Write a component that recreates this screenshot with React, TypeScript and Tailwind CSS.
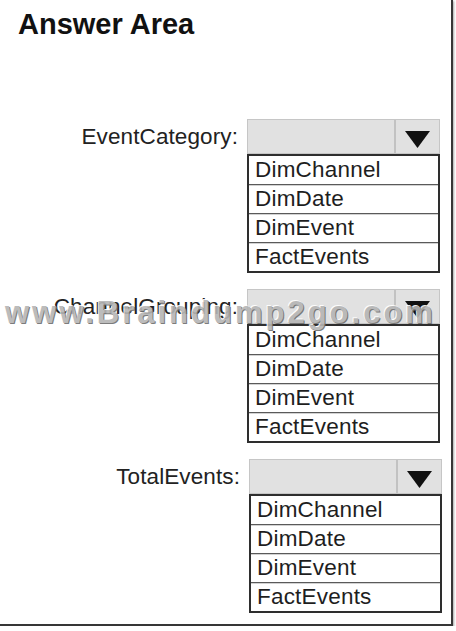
import React from 'react';

const options = ['DimChannel', 'DimDate', 'DimEvent', 'FactEvents'];

interface DropdownProps {
  label: string;
  shift?: boolean;
}

const Arrow = () => (
  <svg width="25" height="17" viewBox="0 0 25 17" className="mt-[6px]">
    <polygon points="0,0 25,0 12.5,17" fill="#111" />
  </svg>
);

const Dropdown: React.FC<DropdownProps> = ({ label, shift }) => (
  <div className={shift ? 'flex items-start ml-[2px]' : 'flex items-start'}>
    <div className="w-[238px] h-[35px] flex items-center justify-end text-[22.5px] text-[#222] tracking-[0.1px]">
      {label}
    </div>
    <div className="ml-[9px] w-[193px]">
      {/* closed select */}
      <div className="h-[35px] flex bg-[#e1e1e1] border border-[#c6c6c6]">
        <div className="flex-1 border-r-2 border-[#c2c2c2]" />
        <div className="w-[43px] flex items-center justify-center">
          <Arrow />
        </div>
      </div>
      {/* option list */}
      <div className="border-2 border-[#2e2e2e] bg-white">
        {options.map((opt, i) => (
          <div
            key={opt}
            className={
              i === 0
                ? 'h-[28px] pl-[6px] leading-[28px] text-[22.5px] text-[#1e1e1e] tracking-[0.2px]'
                : 'h-[29px] pl-[6px] leading-[28px] text-[22.5px] text-[#1e1e1e] tracking-[0.2px] border-t border-[#5a5a5a] shadow-[inset_0_1px_0_#d2d2d2]'
            }
          >
            {opt}
          </div>
        ))}
      </div>
    </div>
  </div>
);

export default function App() {
  return (
    <div className="w-[453px] h-[626px] bg-white border-r-2 border-b-2 border-[#363636] shadow-[1px_1px_2px_rgba(0,0,0,0.35)] relative font-['Liberation_Sans',Arial,sans-serif]">
      <h1 className="pl-[18px] pt-[7px] text-[29px] leading-[34px] font-bold text-[#111]">Answer Area</h1>

      <div className="mt-[78px] flex flex-col gap-[16px]">
        <Dropdown label="EventCategory:" />
        <Dropdown label="ChannelGrouping:" />
        <Dropdown label="TotalEvents:" shift />
      </div>

      {/* watermark */}
      <div className="absolute left-[5px] top-[295px] text-[31px] leading-[36px] font-bold tracking-[3px] text-[#b5b5b5] opacity-90 whitespace-nowrap [text-shadow:1px_1px_0_#6e6e6e,-1px_-1px_0_#ffffff] pointer-events-none">
        www.Braindump2go.com
      </div>
    </div>
  );
}
